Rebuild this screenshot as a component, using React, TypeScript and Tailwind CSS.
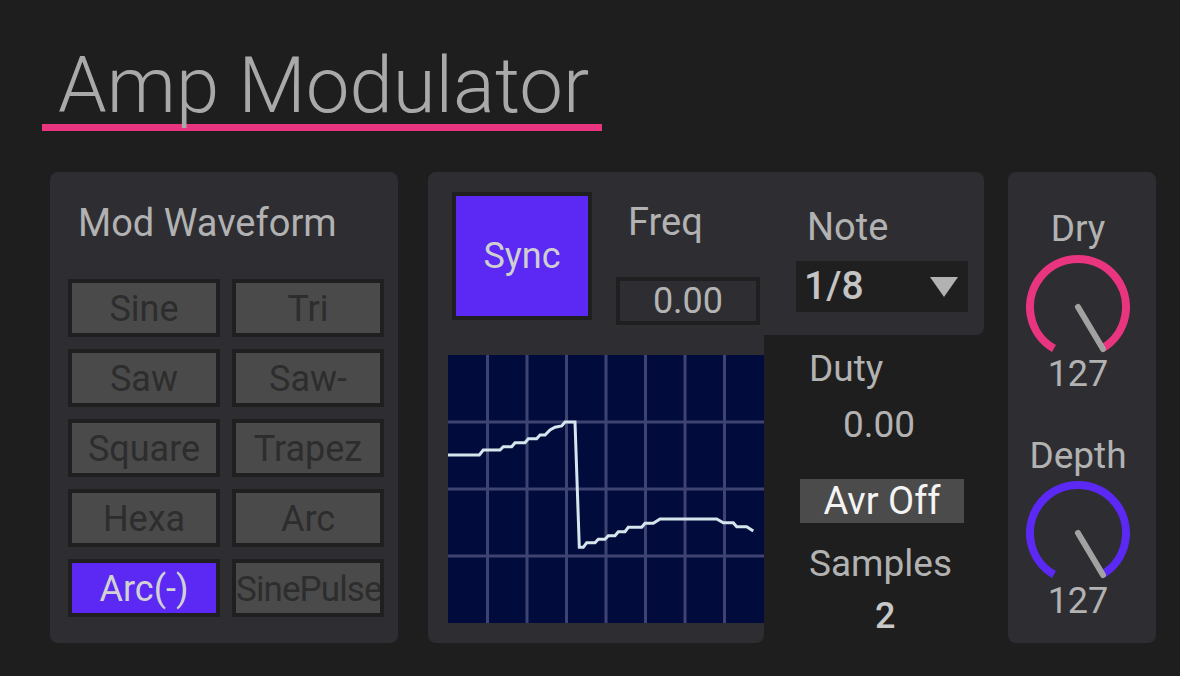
import React from "react";

const waves = [
  { label: "Sine" },
  { label: "Tri" },
  { label: "Saw" },
  { label: "Saw-" },
  { label: "Square" },
  { label: "Trapez" },
  { label: "Hexa" },
  { label: "Arc" },
  { label: "Arc(-)", active: true },
  { label: "SinePulse", overflow: true },
];

const wavePoints =
  "0,100 31.3,100 35.3,95 52,95 55.3,91.7 63.7,91.7 67,87.7 77,87.7 80.3,83.7 88.7,83.7 92,80 97,80 102,75 107,72.3 113.7,71 117,67 127,67 131.3,192.3 135.3,192.3 138.7,187.7 147,187.7 150.3,184.3 157,184.3 160.3,180.7 167,180.7 170.3,176.7 177,176.7 180.3,172.3 193.7,172.3 197,168.3 205.3,168.3 212,164 268.7,164 275.3,167.7 285.3,167.7 288.7,171.7 298.7,171.7 305.3,176";

function WaveButton({
  label,
  active,
  overflow,
}: {
  label: string;
  active?: boolean;
  overflow?: boolean;
}) {
  return (
    <div
      className={`flex items-center overflow-hidden whitespace-nowrap border-4 border-[#1f1f1f] pt-[2px] leading-none ${
        overflow ? "justify-start text-[35px] tracking-[-0.9px]" : "justify-center text-[36px]"
      } ${active ? "bg-[#5b28f4] text-[#d2d2d2]" : "bg-[#4a4a4a] text-[#2d2d2d]"}`}
    >
      {label}
    </div>
  );
}

function Scope() {
  const cols = [1, 2, 3, 4, 5, 6, 7];
  const rows = [1, 2, 3];
  return (
    <svg width="316" height="268" viewBox="0 0 316 268" className="block">
      <rect width="316" height="268" fill="#010c3d" />
      {cols.map((c) => (
        <line
          key={c}
          x1={c * 39.5}
          x2={c * 39.5}
          y1="0"
          y2="268"
          stroke="#3e4372"
          strokeWidth="3"
        />
      ))}
      {rows.map((r) => (
        <line
          key={r}
          x1="0"
          x2="316"
          y1={r * 67}
          y2={r * 67}
          stroke="#3e4372"
          strokeWidth="3"
        />
      ))}
      <polyline
        points={wavePoints}
        fill="none"
        stroke="#d6e6ec"
        strokeWidth="3"
        strokeLinejoin="miter"
      />
    </svg>
  );
}

function Knob({ color }: { color: string }) {
  return (
    <svg width="104" height="104" viewBox="0 0 104 104" className="block">
      <path
        d="M 28 93.57 A 48 48 0 1 1 76 93.57"
        fill="none"
        stroke={color}
        strokeWidth="8"
      />
      <line
        x1="52"
        y1="52"
        x2="77"
        y2="94"
        stroke="#a2a2a2"
        strokeWidth="6"
        strokeLinecap="round"
      />
    </svg>
  );
}

export default function App() {
  return (
    <div className="h-[676px] w-[1180px] overflow-hidden bg-[#1e1e1e] font-[Roboto,sans-serif]">
      <div className="pl-[42px] pt-[47px]">
        <div className="w-[560px]">
          <div className="h-[77px] whitespace-nowrap pl-[16px] text-[78px] font-light leading-none text-[#a9a9a9]">
            Amp Modulator
          </div>
          <div className="h-[7px] bg-[#e9357f]" />
        </div>
      </div>

      <div className="ml-[50px] mt-[41px] flex h-[471px]">
        {/* waveform picker */}
        <div className="w-[348px] rounded-lg bg-[#2e2e32] pt-[32px]">
          <div className="pl-[28px] text-[38px] leading-none text-[#b2b2b2]">Mod Waveform</div>
          <div className="ml-[18px] mt-[37px] grid auto-rows-[58px] grid-cols-[152px_152px] gap-[12px]">
            {waves.map((w) => (
              <WaveButton key={w.label} {...w} />
            ))}
          </div>
        </div>

        {/* rate + scope */}
        <div className="ml-[30px] flex w-[556px] flex-col">
          <div className="flex h-[163px] shrink-0 rounded-t-lg rounded-br-lg bg-[#2e2e32]">
            <div className="ml-[24px] mt-[20px] flex h-[128px] w-[140px] items-center justify-center border-4 border-[#1f1f1f] bg-[#5b28f4] text-[36px] leading-none text-[#cfcfcf]">
              Sync
            </div>
            <div className="ml-[24px] w-[144px]">
              <div className="mt-[31px] pl-[12px] text-[38px] leading-none text-[#b2b2b2]">Freq</div>
              <div className="mt-[36px] flex h-[48px] items-center justify-center border-4 border-[#1f1f1f] text-[36px] leading-none text-[#b4b4b4]">
                0.00
              </div>
            </div>
            <div className="ml-[36px] w-[172px]">
              <div className="mt-[36px] pl-[11px] text-[38px] leading-none text-[#b2b2b2]">Note</div>
              <div className="mt-[15px] flex h-[51px] items-center justify-between bg-[#1f1f1f] pl-[8px] pr-[10px]">
                <span className="text-[39px] font-medium leading-none text-[#c4c4c4]">1/8</span>
                <svg width="28" height="20" viewBox="0 0 28 20">
                  <polygon points="0,0 28,0 14,20" fill="#b2b2b2" />
                </svg>
              </div>
            </div>
          </div>

          <div className="flex flex-1">
            <div className="w-[336px] rounded-b-lg bg-[#2e2e32] p-[20px]">
              <Scope />
            </div>
            <div className="flex-1 pl-[45px] pt-[15px] text-[#b2b2b2]">
              <div className="text-[37px] leading-none">Duty</div>
              <div className="ml-[34px] mt-[19px] text-[37px] leading-none">0.00</div>
              <div className="-ml-[9px] mt-[36px] flex h-[44px] w-[164px] items-center justify-center bg-[#4b4b4b] text-[38px] leading-none text-[#f4f4f4]">
                Avr Off
              </div>
              <div className="mt-[22px] text-[37px] leading-none">Samples</div>
              <div className="ml-[66px] mt-[16px] text-[36px] font-medium leading-none text-[#c8c8c8]">2</div>
            </div>
          </div>
        </div>

        {/* mix knobs */}
        <div className="ml-[24px] flex w-[148px] flex-col items-center rounded-lg bg-[#2e2e32] pr-[8px] pt-[38px] text-[#b2b2b2]">
          <div className="text-[37px] leading-none">Dry</div>
          <div className="mt-[8px]">
            <Knob color="#e9357f" />
          </div>
          <div className="-mt-[3px] text-[36px] leading-none">127</div>
          <div className="mt-[45px] text-[37px] leading-none">Depth</div>
          <div className="mt-[7px]">
            <Knob color="#5b28f4" />
          </div>
          <div className="-mt-[2px] text-[36px] leading-none">127</div>
        </div>
      </div>
    </div>
  );
}
